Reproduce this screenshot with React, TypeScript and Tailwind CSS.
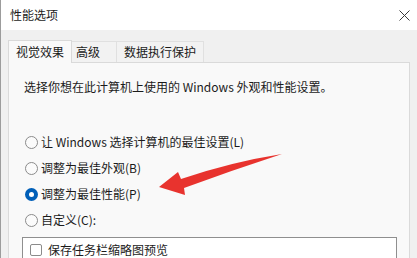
import { FC } from "react";

const font = { fontFamily: '"Segoe UI", "Noto Sans CJK SC", "Noto Sans", sans-serif' };

type RadioItem = { label: string; checked?: boolean };

const radios: RadioItem[] = [
  { label: "让 Windows 选择计算机的最佳设置(L)" },
  { label: "调整为最佳外观(B)" },
  { label: "调整为最佳性能(P)", checked: true },
  { label: "自定义(C):" },
];

const Radio: FC<RadioItem> = ({ label, checked }) => (
  <div className="h-[26px] flex items-center ml-[3px]">
    {checked ? (
      <span className="w-[13px] h-[13px] rounded-full bg-[#005fb8] flex items-center justify-center shrink-0">
        <span className="w-[5px] h-[5px] rounded-full bg-white" />
      </span>
    ) : (
      <span className="w-[13px] h-[13px] rounded-full border border-[#8b8b8b] bg-[#fbfbfb] shrink-0" />
    )}
    <span className="ml-[3px] text-[12px] leading-[16px] text-[#1b1b1b]">{label}</span>
  </div>
);

const App: FC = () => {
  return (
    <div
      className="relative w-[417px] h-[258px] overflow-hidden bg-[#f0f0f0] border-l border-[#9c9c9c] flex flex-col"
      style={font}
    >
      {/* title bar */}
      <div className="h-[30px] bg-white flex items-center justify-between pl-[9px] pr-[7px] shrink-0">
        <span className="text-[12px] text-[#1b1b1b]">性能选项</span>
        <svg width="11" height="11" viewBox="0 0 11 11" className="text-[#3a3a3a]">
          <path d="M0.5 0.5 L10.5 10.5 M10.5 0.5 L0.5 10.5" stroke="currentColor" strokeWidth="1" />
        </svg>
      </div>

      {/* tabs */}
      <div className="flex items-end pl-[7px] pt-[10px] shrink-0">
        <div className="h-[23px] bg-[#f9f9f9] border border-b-0 border-[#d9d9d9] px-[7px] flex items-center text-[12px] text-[#1b1b1b] relative z-10 -mb-px">
          视觉效果
        </div>
        <div className="h-[21px] border-t border-r border-[#e0e0e0] bg-[#f2f2f2] pl-[4px] pr-[16px] flex items-center text-[12px] text-[#1b1b1b]">
          高级
        </div>
        <div className="h-[21px] border-t border-r border-[#e0e0e0] bg-[#f2f2f2] px-[7px] flex items-center text-[12px] text-[#1b1b1b]">
          数据执行保护
        </div>
      </div>

      {/* panel */}
      <div className="flex-1 ml-[7px] mr-[7px] border border-b-0 border-[#dadada] bg-[#f9f9f9] pl-[13px] pt-[16px]">
        <p className="ml-[2px] text-[12px] leading-[16px] text-[#1b1b1b]">
          选择你想在此计算机上使用的 Windows 外观和性能设置。
        </p>
        <div className="mt-[34px] flex flex-col">
          {radios.map((r) => (
            <Radio key={r.label} label={r.label} checked={r.checked} />
          ))}
        </div>
        <div className="mt-[4px] w-[375px] h-[40px] border border-[#8f8f8f] bg-white pl-[7px] pt-[4px]">
          <div className="flex items-center">
            <span className="w-[12px] h-[12px] rounded-[2px] border border-[#8b8b8b] bg-white shrink-0" />
            <span className="ml-[6px] text-[12px] leading-[16px] text-[#1b1b1b]">保存任务栏缩略图预览</span>
          </div>
        </div>
      </div>

      {/* red arrow annotation */}
      <svg className="absolute left-0 top-0 pointer-events-none" width="417" height="258" viewBox="0 0 417 258">
        <path
          d="M158 187 L177 172 L180 179 Q230 162 281 154 Q232 170 183 188 L184 195 Z"
          fill="#e8332e"
        />
      </svg>
    </div>
  );
};

export default App;
